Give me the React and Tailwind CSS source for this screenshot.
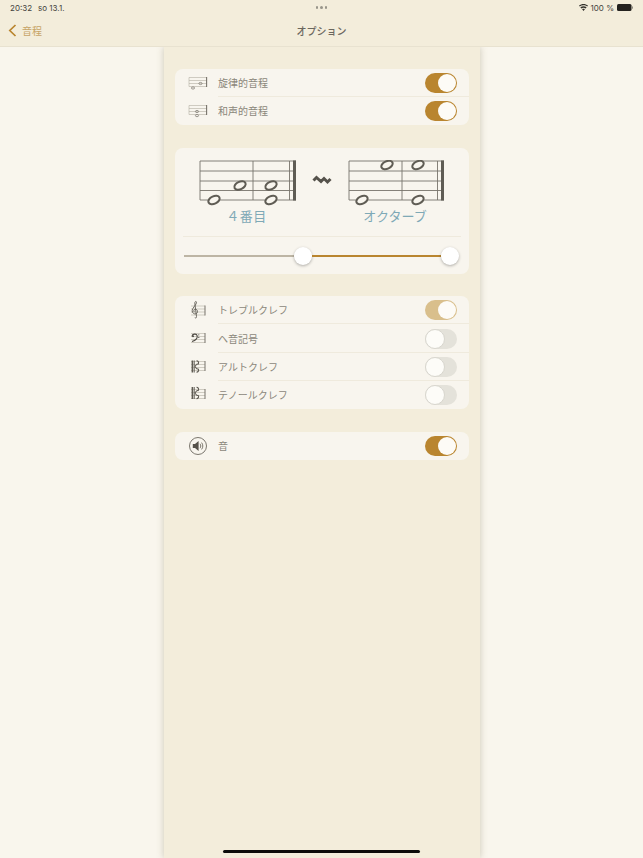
import React from 'react';

const CJK = { fontFamily: '"Noto Sans CJK JP", "Noto Sans", sans-serif' };

function Toggle({ on, dim }) {
  if (on) {
    return (
      <div className={`w-[32px] h-[20px] rounded-full flex justify-end items-center p-[1px] ${dim ? 'bg-[#d9bf8c]' : 'bg-[#b9852f]'}`}>
        <div className="w-[18px] h-[18px] rounded-full bg-[#fdfbf6]" />
      </div>
    );
  }
  return (
    <div className="w-[32px] h-[20px] rounded-full flex items-center bg-[#e4e2da]">
      <div className="w-[20px] h-[20px] rounded-full bg-[#fdfcf8] border border-[#d8d6ce]" />
    </div>
  );
}

// tiny staff behind the row icons
function MiniStaff({ children }) {
  return (
    <svg width="20" height="18" viewBox="0 0 20 18" fill="none">
      <g stroke="#b3afa2" strokeWidth="0.6">
        <path d="M1 3.5H19M1 6.5H19M1 9.5H19M1 12.5H19" />
        <path d="M1 3.5V12.5" />
      </g>
      <path d="M18.6 3V13" stroke="#77736a" strokeWidth="1.1" />
      {children}
    </svg>
  );
}

function MelodicIcon() {
  return (
    <MiniStaff>
      <ellipse cx="5" cy="14" rx="1.6" ry="1.1" stroke="#77736a" strokeWidth="0.7" />
      <ellipse cx="12.5" cy="9.5" rx="1.6" ry="1.1" stroke="#77736a" strokeWidth="0.7" />
    </MiniStaff>
  );
}

function HarmonicIcon() {
  return (
    <MiniStaff>
      <ellipse cx="9" cy="9.5" rx="1.6" ry="1.1" stroke="#77736a" strokeWidth="0.7" />
      <ellipse cx="9" cy="13.6" rx="1.6" ry="1.1" stroke="#77736a" strokeWidth="0.7" />
    </MiniStaff>
  );
}

function TrebleIcon() {
  return (
    <svg width="20" height="20" viewBox="0 0 20 20" fill="none">
      <g stroke="#b3afa2" strokeWidth="0.6">
        <path d="M3 6H17M3 9H17M3 12H17M3 15H17" />
      </g>
      <path d="M17 5.5V15.5" stroke="#77736a" strokeWidth="1" />
      <path
        d="M6.8 17.6C7.8 18.4 8.8 17.7 8.5 16.4L6.8 3.2C6.7 1.6 8.3 0.6 8.5 2.4C8.7 4.4 4.4 7.6 4.2 10.6C4.1 13 6.2 14.4 8 13.8C10.2 13 9.9 9.4 7.6 9.2C5.8 9.1 5.2 11.2 6.6 12.2"
        stroke="#5f5b53"
        strokeWidth="0.9"
      />
    </svg>
  );
}

function BassIcon() {
  return (
    <svg width="20" height="18" viewBox="0 0 20 18" fill="none">
      <g stroke="#b3afa2" strokeWidth="0.6">
        <path d="M3 3.5H17M3 6.5H17M3 9.5H17M3 12.5H17" />
      </g>
      <path d="M17 3V13" stroke="#77736a" strokeWidth="1" />
      <path d="M4 6.2C4.2 3.8 8.6 3.2 9.2 5.8C9.6 8 7.2 10.4 4 11.6" stroke="#4f4b44" strokeWidth="1.1" />
      <circle cx="5" cy="6.2" r="1" fill="#4f4b44" />
      <circle cx="10.8" cy="4.8" r="0.6" fill="#4f4b44" />
      <circle cx="10.8" cy="7.4" r="0.6" fill="#4f4b44" />
    </svg>
  );
}

function CClefIcon({ up }) {
  return (
    <svg width="20" height="18" viewBox="0 0 20 18" fill="none">
      <g stroke="#b3afa2" strokeWidth="0.6">
        <path d="M3 3.5H17M3 6.5H17M3 9.5H17M3 12.5H17" />
      </g>
      <path d="M17 3V13" stroke="#77736a" strokeWidth="1" />
      <g transform={up ? 'translate(0.5 -1.5)' : 'translate(0.5 0)'}>
        <path d="M4 2.5V14.5" stroke="#5f5b53" strokeWidth="1.8" />
        <path d="M6 2.5V14.5" stroke="#5f5b53" strokeWidth="0.7" />
        <path
          d="M6.4 8.5L8 6.5C8.6 5.6 9.6 6.4 9.8 6C10.6 4.6 9.8 2.8 8 2.8M6.4 8.5L8 10.5C8.6 11.4 9.6 10.6 9.8 11C10.6 12.4 9.8 14.2 8 14.2"
          stroke="#5f5b53"
          strokeWidth="1.1"
        />
      </g>
    </svg>
  );
}

function SoundIcon() {
  return (
    <svg width="20" height="20" viewBox="0 0 20 20" fill="none">
      <circle cx="10" cy="10" r="8.5" stroke="#6d6960" strokeWidth="0.9" fill="#f8f5ee" />
      <path d="M4.8 8H7L10.6 5V15L7 12H4.8Z" fill="#55514a" />
      <path d="M12 7.8C13 9 13 11 12 12.2M13.6 6.6C15.2 8.6 15.2 11.4 13.6 13.4" stroke="#6d6960" strokeWidth="0.9" />
    </svg>
  );
}

function Row({ icon, label, on, dim, last, tall }) {
  return (
    <div className={`flex items-center ${tall ? 'h-[29px] pb-[1px]' : 'h-[28px]'}`}>
      <div className="w-[43px] pl-[13px] flex items-center shrink-0">{icon}</div>
      <div className={`flex-1 h-full flex items-center justify-between pr-[12px] border-b ${last ? 'border-transparent' : 'border-[#efeadd]'}`}>
        <span className="text-[10px] text-[#8b877b]" style={CJK}>{label}</span>
        <Toggle on={on} dim={dim} />
      </div>
    </div>
  );
}

function Staff({ width, bar, notes }) {
  const lines = [1, 11, 21, 30.5, 40];
  return (
    <svg width={width + 4} height="50" viewBox={`0 0 ${width + 4} 50`} fill="none">
      {lines.map((y) => (
        <path key={y} d={`M1 ${y}H${width}`} stroke="#77746b" strokeWidth="0.9" />
      ))}
      <path d="M1 1V40" stroke="#77746b" strokeWidth="0.9" />
      <path d={`M${bar} 1V40`} stroke="#77746b" strokeWidth="0.9" />
      <path d={`M${width - 6.5} 1V40`} stroke="#77746b" strokeWidth="0.9" />
      <path d={`M${width - 1.5} 0.5V40.5`} stroke="#5f5c54" strokeWidth="3" />
      {notes.map(([x, y]) => (
        <g key={`${x}-${y}`} transform={`translate(${x} ${y}) rotate(-25)`}>
          <ellipse rx="6" ry="3.7" stroke="#5f5c54" strokeWidth="2" fill="#f8f5ee" />
        </g>
      ))}
    </svg>
  );
}

export default function App() {
  return (
    <div className="relative w-[643px] h-[858px] overflow-hidden flex flex-col bg-[#f9f6ed]" style={CJK}>
      {/* status + nav */}
      <div className="relative z-10 h-[47px] shrink-0 bg-[#f3eddb] border-b border-[#e8e2d0] flex flex-col">
        <div className="h-[15px] grid grid-cols-3 items-center px-[10px] text-[8px] text-[#45433d]" style={{ fontFamily: 'Inter, sans-serif' }}>
          <div className="flex gap-[6px]">
            <span>20:32</span>
            <span>so 13.1.</span>
          </div>
          <div className="flex justify-center gap-[2px]">
            <span className="w-[2.5px] h-[2.5px] rounded-full bg-[#98958a]" />
            <span className="w-[2.5px] h-[2.5px] rounded-full bg-[#98958a]" />
            <span className="w-[2.5px] h-[2.5px] rounded-full bg-[#98958a]" />
          </div>
          <div className="flex justify-end items-center gap-[3px]">
            <svg width="9" height="7" viewBox="0 0 18 14" fill="#33312c">
              <path d="M9 14L6.2 10.6C7.8 9.4 10.2 9.4 11.8 10.6ZM4.6 8.8L2.8 6.6C6.4 3.8 11.6 3.8 15.2 6.6L13.4 8.8C10.8 6.8 7.2 6.8 4.6 8.8ZM1.4 5L0 3.2C5 -1 13 -1 18 3.2L16.6 5C12.2 1.4 5.8 1.4 1.4 5Z" />
            </svg>
            <span>100 %</span>
            <svg width="16" height="7" viewBox="0 0 16 7">
              <rect x="0" y="0" width="14.5" height="7" rx="1.5" fill="#24221f" />
              <rect x="15" y="2.2" width="1" height="2.6" rx="0.5" fill="#8f8c82" />
            </svg>
          </div>
        </div>
        <div className="flex-1 grid grid-cols-3 items-center px-[8px] pb-[1px]">
          <div className="flex items-center gap-[5px]">
            <svg width="9" height="13" viewBox="0 0 9 13" fill="none">
              <path d="M7.5 1L1.8 6.5L7.5 12" stroke="#b9852f" strokeWidth="1.7" />
            </svg>
            <span className="text-[10px] text-[#c7a467]">音程</span>
          </div>
          <div className="text-center text-[10px] font-medium text-[#6b675e]">オプション</div>
          <div />
        </div>
      </div>

      {/* body */}
      <div className="flex-1 flex">
        <div className="w-[164px] shrink-0" />
        <div className="w-[316px] shrink-0 bg-[#f3eddb] shadow-[0_0_7px_rgba(120,110,80,0.35)] px-[11px] pt-[22px] flex flex-col">
          <div className="rounded-[8px] bg-[#f8f5ee]">
            <Row icon={<MelodicIcon />} label="旋律的音程" on />
            <Row icon={<HarmonicIcon />} label="和声的音程" on last />
          </div>

          <div className="mt-[23px] h-[126px] rounded-[8px] bg-[#f8f5ee] flex flex-col">
            <div className="h-[89px] border-b border-[#efeadd] mx-[8px] pt-[12px] flex items-start">
              <div className="w-[129px] pl-[16px] shrink-0 flex flex-col">
                <Staff width={97} bar={54} notes={[[15, 40], [41, 25.5], [72, 25.5], [72, 40]]} />
                <div className="-mt-[2px] w-[95px] text-center text-[13px] leading-[16px] tracking-[0.5px] text-[#7fa9b6]">４番目</div>
              </div>
              <svg width="20" height="10" viewBox="0 0 20 10" className="mt-[15px] shrink-0" fill="none">
                <path d="M1.5 5.5L4.5 2.5L9 6.5L12 3.5L15.5 7L18.5 4" stroke="#55524b" strokeWidth="3" />
              </svg>
              <div className="ml-[16px] w-[100px] shrink-0 flex flex-col">
                <Staff width={96} bar={54} notes={[[39, 5], [70, 5], [14, 40], [70, 40]]} />
                <div className="-mt-[2px] w-[94px] text-center text-[13px] leading-[16px] text-[#7fa9b6]">オクターブ</div>
              </div>
            </div>
            <div className="flex-1 flex items-center pl-[9px] pr-[10px]">
              <div className="w-[110px] h-[2px] bg-[#bdb5a4]" />
              <div className="w-[18px] h-[18px] rounded-full bg-white shadow-[0_1px_3px_rgba(0,0,0,0.3)] shrink-0" />
              <div className="flex-1 h-[2px] bg-[#b9852f]" />
              <div className="w-[18px] h-[18px] rounded-full bg-white shadow-[0_1px_3px_rgba(0,0,0,0.3)] shrink-0" />
            </div>
          </div>

          <div className="mt-[22px] rounded-[8px] bg-[#f8f5ee]">
            <Row icon={<TrebleIcon />} label="トレブルクレフ" on dim tall />
            <Row icon={<BassIcon />} label="ヘ音記号" />
            <Row icon={<CClefIcon />} label="アルトクレフ" />
            <Row icon={<CClefIcon up />} label="テノールクレフ" last />
          </div>

          <div className="mt-[23px] rounded-[8px] bg-[#f8f5ee]">
            <Row icon={<SoundIcon />} label="音" on last />
          </div>
        </div>
        <div className="flex-1" />
      </div>

      {/* home indicator */}
      <div className="absolute left-[223px] bottom-[5px] w-[197px] h-[3.5px] rounded-full bg-[#0c0c0a]" />
    </div>
  );
}
